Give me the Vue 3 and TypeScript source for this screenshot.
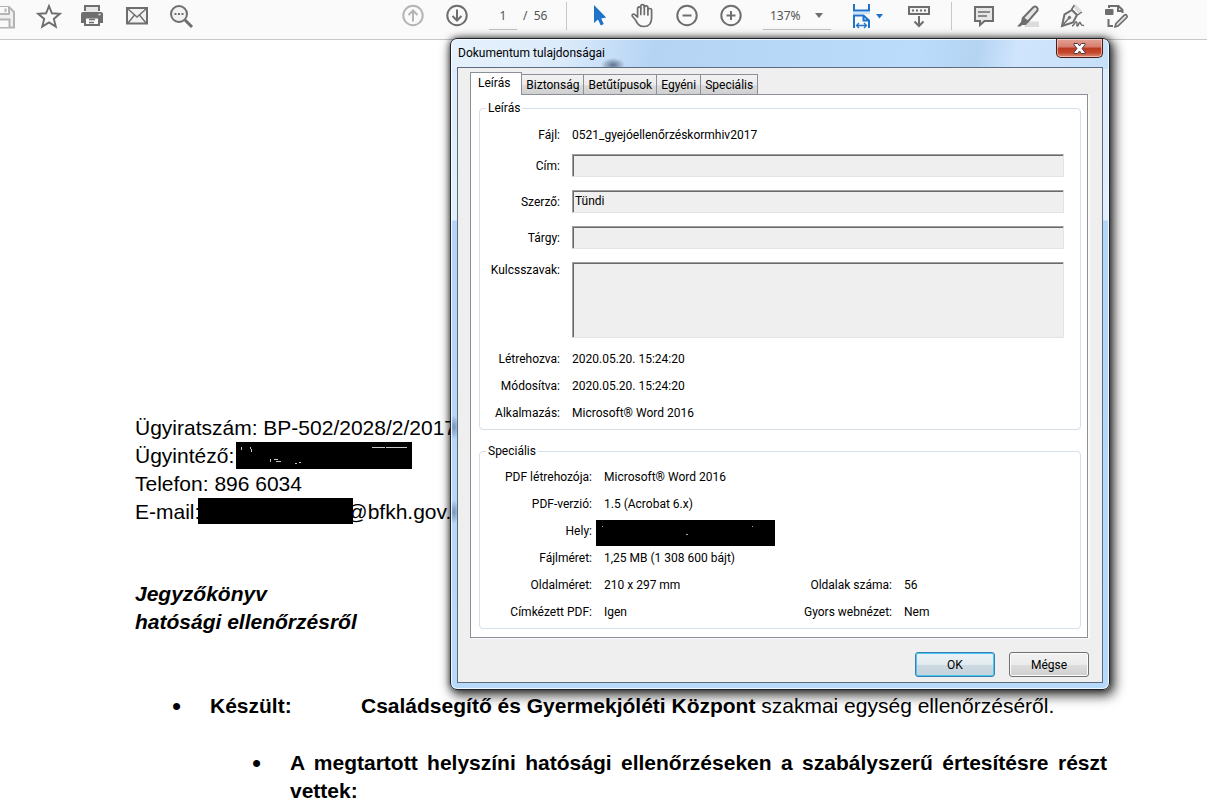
<script setup lang="ts">
import { ref } from 'vue'

interface Row {
  label: string
  value: string
}

const tabs: string[] = ['Leírás', 'Biztonság', 'Betűtípusok', 'Egyéni', 'Speciális']
const activeTab = ref<string>('Leírás')
const page = ref<string>('1')
const title = ref<string>('')
const author = ref<string>('Tündi')
const subject = ref<string>('')
const keywords = ref<string>('')

const dates: Row[] = [
  { label: 'Létrehozva:', value: '2020.05.20. 15:24:20' },
  { label: 'Módosítva:', value: '2020.05.20. 15:24:20' },
  { label: 'Alkalmazás:', value: 'Microsoft® Word 2016' },
]
</script>

<template>
  <div class="app">
    <header class="toolbar">
      <div class="group first">
        <button class="tool" aria-label="Mentés">
          <svg width="26" height="26" viewBox="0 0 26 26" fill="none" stroke="#b4b4b4" stroke-width="2">
            <path d="M3 4h14l5 5v15.500H3z" fill="#f0f0f0" />
            <path d="M7 4v7h10V4M7 24v-7.500h10.500V24" fill="#fafafa" />
            <path d="M13.500 5.500v3.500" />
          </svg>
        </button>
        <button class="tool" aria-label="Csillag">
          <svg width="26" height="26" viewBox="0 0 26 26" fill="none" stroke="#6e6e6e" stroke-width="1.900">
            <path d="M13 3l2.900 7.300 8 .5-6.100 5.100 2 7.700L13 19.400l-6.800 4.200 2-7.700-6.100-5.100 8-.5z" />
          </svg>
        </button>
        <button class="tool" aria-label="Nyomtatás">
          <svg width="26" height="26" viewBox="0 0 26 26">
            <path d="M4 2h16v6H4z" fill="#6e6e6e" />
            <path d="M6 4h12v5H6z" fill="#e6e6e6" />
            <path d="M3 9h18a2 2 0 0 1 2 2v9H1v-9a2 2 0 0 1 2-2z" fill="#6e6e6e" />
            <path d="M5 14.500h14V22H5z" fill="#fafafa" stroke="#6e6e6e" stroke-width="2" />
            <path d="M9 16.500h6M9 19.500h5" stroke="#6e6e6e" stroke-width="1.300" />
            <path d="M18.500 11.500h2" stroke="#e6e6e6" stroke-width="1.500" />
          </svg>
        </button>
        <button class="tool" aria-label="E-mail">
          <svg width="26" height="26" viewBox="0 0 26 26" fill="none" stroke="#6e6e6e">
            <rect x="3" y="5" width="20" height="15.500" stroke-width="2" fill="#f2f2f2" />
            <path d="M4 6l9 8 9-8M4 20l6.500-8M22 20l-6.500-8" stroke-width="1.400" />
          </svg>
        </button>
        <button class="tool" aria-label="Keresés">
          <svg width="26" height="26" viewBox="0 0 26 26" fill="none" stroke="#6e6e6e">
            <circle cx="11" cy="11" r="8" stroke-width="2" fill="#f2f2f2" />
            <path d="M17 17l7 7" stroke-width="3" />
            <path d="M6.500 11h2M10 11h2M13.500 11h2" stroke-width="2" />
          </svg>
        </button>
      </div>
      <div class="spacer-left"></div>
      <div class="group">
        <button class="tool" aria-label="Előző oldal">
          <svg width="26" height="26" viewBox="0 0 26 26" fill="none" stroke="#b4b4b4" stroke-width="2">
            <circle cx="13" cy="12.500" r="9.700" />
            <path d="M13 18.500V8M8.500 12L13 7.500l4.500 4.500" />
          </svg>
        </button>
        <button class="tool" aria-label="Következő oldal">
          <svg width="26" height="26" viewBox="0 0 26 26" fill="none" stroke="#6e6e6e" stroke-width="2">
            <circle cx="13" cy="12.500" r="9.700" />
            <path d="M13 6.500V17M8.500 13l4.500 4.500 4.500-4.500" />
          </svg>
        </button>
        <input v-model="page" class="page" aria-label="Oldalszám" />
        <span class="total">/&nbsp; 56</span>
        <span class="divider"></span>
        <button class="tool" aria-label="Kijelölés">
          <svg width="26" height="26" viewBox="0 0 26 26" fill="#1f74c9">
            <path d="M8 2v18l4-3.500 2.800 6 3-1.500-2.600-5.500 5-1z" />
          </svg>
        </button>
        <button class="tool" aria-label="Kéz">
          <svg width="26" height="26" viewBox="0 0 26 26" fill="#fafafa" stroke="#6e6e6e" stroke-width="1.700" stroke-linejoin="round" stroke-linecap="round">
            <path d="M7.600 14V5.500a1.600 1.600 0 0 1 3.200 0V3.400a1.700 1.700 0 0 1 3.500 0v1a1.700 1.700 0 0 1 3.600.4v2.400a1.700 1.700 0 0 1 3.700.3V15c0 6-3 8.500-7.700 8.500-5 0-6.600-3-8.400-6.500L2.200 13c-.5-1.800 1.400-2.500 2.700-1.300z" />
            <path d="M10.800 5v6.500M14.300 4v7.500M17.900 6v6" fill="none" />
          </svg>
        </button>
        <button class="tool" aria-label="Kicsinyítés">
          <svg width="26" height="26" viewBox="0 0 26 26" fill="none" stroke="#6e6e6e" stroke-width="2">
            <circle cx="13" cy="12.500" r="9.700" />
            <path d="M8.500 12.500h9" />
          </svg>
        </button>
        <button class="tool" aria-label="Nagyítás">
          <svg width="26" height="26" viewBox="0 0 26 26" fill="none" stroke="#6e6e6e" stroke-width="2">
            <circle cx="13" cy="12.500" r="9.700" />
            <path d="M8.500 12.500h9M13 8v9" />
          </svg>
        </button>
        <label class="zoom">
          <select aria-label="Nagyítás mértéke">
            <option>137%</option>
          </select>
          <svg width="8" height="5" viewBox="0 0 8 5" fill="#6e6e6e"><path d="M0 0h8L4 5z" /></svg>
        </label>
        <button class="tool fit" aria-label="Szélesség igazítása">
          <svg width="20" height="26" viewBox="0 0 20 26" fill="none" stroke="#1f74c9" stroke-width="2">
            <path d="M1 1v6.500h15V1" />
            <path d="M0 10h17" stroke="#cfe3f6" />
            <path d="M1 25V12.500h9.500l5.500 5V25M10.500 12.500v5H16" />
            <path d="M4 22.500h9M6 20l-2.500 2.500L6 25M11 20l2.500 2.500L11 25" stroke-width="1.300" />
          </svg>
          <svg width="7" height="5" viewBox="0 0 7 5" fill="#1f74c9"><path d="M0 0h7L3.500 4.500z" /></svg>
        </button>
        <button class="tool" aria-label="Eszköztár">
          <svg width="26" height="26" viewBox="0 0 26 26" fill="none" stroke="#6e6e6e" stroke-width="2">
            <rect x="3" y="4" width="20" height="7" fill="#f2f2f2" />
            <path d="M6 7.500h14" stroke-dasharray="2 2" />
            <path d="M13 13v9.500M8.500 18.500L13 23l4.500-4.500" />
          </svg>
        </button>
        <span class="divider"></span>
        <button class="tool" aria-label="Megjegyzés">
          <svg width="26" height="26" viewBox="0 0 26 26" fill="#e6e6e6" stroke="#6e6e6e" stroke-width="2">
            <path d="M4 4h18v14H13.500L9 22v-4H4z" />
            <path d="M7 9h12M7 13h9" stroke-width="1.300" />
          </svg>
        </button>
        <button class="tool" aria-label="Kiemelés">
          <svg width="26" height="26" viewBox="0 0 26 26">
            <path d="M13 18.500h11V24H9z" fill="#dcdcdc" />
            <path d="M8 15L18.500 4a2.800 2.800 0 0 1 4 3.500L13 18.500z" fill="#e6e6e6" stroke="#6e6e6e" stroke-width="2" />
            <path d="M7 14.500l6.500 4.500-2.500 3H7l-1.500 1.500H2L6 19z" fill="#6e6e6e" />
          </svg>
        </button>
        <button class="tool" aria-label="Aláírás">
          <svg width="26" height="26" viewBox="0 0 26 26" fill="none" stroke="#6e6e6e" stroke-width="2">
            <path d="M14 4l3-2.500 6 6-3.500 3z" fill="#dedede" stroke="none" />
            <path d="M3 23l2.500-11.500L13 7l5 5-4 7.500z" fill="#f4f4f4" />
            <path d="M12.500 6.500l3-4.500M18.500 12l4.500-3M3 23l7-8" stroke-width="1.500" />
            <circle cx="10.500" cy="14.500" r="1.200" fill="#6e6e6e" stroke-width="1" />
            <path d="M13 23c3-1 3-5 4.500-4s-.5 4 1 4 1-4 2.500-3.500-.5 3.500 4 3" stroke-width="1.500" />
          </svg>
        </button>
        <button class="tool" aria-label="Szerkesztés">
          <svg width="26" height="26" viewBox="0 0 26 26" fill="none" stroke="#6e6e6e" stroke-width="2">
            <path d="M6 5V3h9.500l4 4v3M5.500 16v7H10M15 3v5h4.500" />
            <rect x="2" y="6" width="8.500" height="6" rx="1" fill="#6e6e6e" stroke="none" />
            <path d="M13 20.500L21.500 12c1.500-1 3.500 1 2.300 2.500L15 23l-3 .8z" fill="#e6e6e6" stroke-width="1.700" />
          </svg>
        </button>
      </div>
      <div class="spacer-right"></div>
    </header>

    <main class="document">
      <p>Ügyiratszám: BP-502/2028/2/2017</p>
      <p>
        Ügyintéző:&nbsp;<span class="redacted name"><svg width="176" height="27" viewBox="0 0 176 27" fill="none" stroke="#c8c8c8">
          <path d="M5.500 5v3M14.500 5v2M15.500 7v3M34.500 17v3M38 17.500h4M40 19.500h5M59 21.500h2M63 20.500h2M136 5.500h13M150 5.500h21" />
        </svg></span>,
      </p>
      <p>Telefon: 896 6034</p>
      <p>E-mail:<span class="redacted mail"></span>@bfkh.gov.</p>
      <h1>Jegyzőkönyv<br />hatósági ellenőrzésről</h1>
      <ul>
        <li class="item">
          <span class="bullet">•</span>
          <strong class="term">Készült:</strong>
          <span><strong>Családsegítő és Gyermekjóléti Központ</strong> szakmai egység ellenőrzéséről.</span>
        </li>
        <li class="item nested">
          <span class="bullet">•</span>
          <strong class="justified">A megtartott helyszíni hatósági ellenőrzéseken a szabályszerű értesítésre részt vettek:</strong>
        </li>
      </ul>
    </main>

    <section class="dialog" role="dialog" aria-labelledby="dialog-title">
      <div class="titlebar">
        <h2 id="dialog-title">Dokumentum tulajdonságai</h2>
        <button class="close" aria-label="Bezárás">
          <svg width="13" height="11" viewBox="0 0 13 11">
            <path d="M1 .5h3.700L6.500 3 8.300.5H12v1.200L9 5.500l3 3.800v1.200H8.300L6.500 8l-1.800 2.500H1V9.300l3-3.800-3-3.800z" fill="#fff" stroke="#4d3a48" stroke-width="1" />
          </svg>
        </button>
      </div>
      <div class="client">
        <div class="tabs" role="tablist">
          <button
            v-for="tab in tabs"
            :key="tab"
            class="tab"
            :class="{ active: tab === activeTab }"
            role="tab"
            :aria-selected="tab === activeTab"
            @click="activeTab = tab"
          >{{ tab }}</button>
        </div>
        <div class="panel" role="tabpanel">
          <fieldset class="description">
            <legend>Leírás</legend>
            <div class="row">
              <span class="label">Fájl:</span>
              <span>0521_gyejóellenőrzéskormhiv2017</span>
            </div>
            <div class="fields">
              <div class="row">
                <label class="label" for="title">Cím:</label>
                <input id="title" v-model="title" readonly />
              </div>
              <div class="row">
                <label class="label" for="author">Szerző:</label>
                <input id="author" v-model="author" readonly />
              </div>
              <div class="row">
                <label class="label" for="subject">Tárgy:</label>
                <input id="subject" v-model="subject" readonly />
              </div>
              <div class="row top">
                <label class="label" for="keywords">Kulcsszavak:</label>
                <textarea id="keywords" v-model="keywords" readonly></textarea>
              </div>
            </div>
            <div class="dates">
              <div v-for="row in dates" :key="row.label" class="row">
                <span class="label">{{ row.label }}</span>
                <span>{{ row.value }}</span>
              </div>
            </div>
          </fieldset>
          <fieldset class="advanced">
            <legend>Speciális</legend>
            <div class="details">
              <span class="label">PDF létrehozója:</span>
              <span class="wide">Microsoft® Word 2016</span>
              <span class="label">PDF-verzió:</span>
              <span class="wide">1.5 (Acrobat 6.x)</span>
              <span class="label">Hely:</span>
              <span class="wide"><span class="location"><svg width="179" height="26" viewBox="0 0 179 26" stroke="#a8a8a8">
                <path d="M6 6.500h1M90 14.500h2M156 6.500h1" />
              </svg></span></span>
              <span class="label">Fájlméret:</span>
              <span class="wide">1,25 MB (1 308 600 bájt)</span>
              <span class="label">Oldalméret:</span>
              <span>210 x 297 mm</span>
              <span class="label">Oldalak száma:</span>
              <span>56</span>
              <span class="label">Címkézett PDF:</span>
              <span>Igen</span>
              <span class="label">Gyors webnézet:</span>
              <span>Nem</span>
            </div>
          </fieldset>
        </div>
        <div class="actions">
          <button class="action default">OK</button>
          <button class="action">Mégse</button>
        </div>
      </div>
    </section>
  </div>
</template>

<style>
html,
body {
  margin: 0;
  height: 100%;
  overflow: hidden;
  background: #fff;
}
</style>

<style scoped>
.app {
  position: relative;
  overflow: hidden;
  height: 100vh;
  color: #000;
  font-family: "Noto Sans", "Open Sans", sans-serif;
  font-size: 12px;
}
.app * {
  box-sizing: border-box;
}
button,
input,
select,
textarea {
  font: inherit;
  color: inherit;
  margin: 0;
}

/* Toolbar */
.toolbar {
  display: flex;
  height: 40px;
  background: #fafafa;
  border-bottom: 1px solid #c8c8c8;
}
.group {
  display: flex;
  flex: none;
  height: 32px;
}
.first {
  margin-left: -17px;
}
.spacer-left {
  flex: 188 0 0;
}
.spacer-right {
  flex: 69 0 0;
}
.tool {
  display: flex;
  align-items: center;
  justify-content: center;
  width: 44px;
  height: 32px;
  padding: 0;
  border: 0;
  background: none;
}
.page {
  width: 28px;
  height: 30px;
  margin-left: 10px;
  padding: 2px 0 0;
  border: 0;
  border-bottom: 1px solid #c0c0c0;
  background: none;
  color: #555;
  text-align: center;
}
.total {
  width: 39px;
  padding-left: 6px;
  color: #555;
  line-height: 32px;
  white-space: nowrap;
}
.divider {
  width: 1px;
  height: 28px;
  margin: 2px 10px 0;
  background: #c8c8c8;
}
.zoom {
  display: flex;
  align-items: center;
  width: 68px;
  height: 30px;
  margin-left: 10px;
  padding: 2px 8px 0 7px;
  border-bottom: 1px solid #c0c0c0;
  color: #555;
}
.zoom select {
  flex: 1;
  min-width: 0;
  padding: 0;
  border: 0;
  background: none;
  appearance: none;
}
.fit {
  width: 66px;
  gap: 3px;
  padding-left: 8px;
}

/* Document page */
.document {
  margin: 374px 100px 0 135px;
  font-family: "Liberation Sans", Arial, sans-serif;
  font-size: 21px;
  line-height: 28px;
}
.document p {
  margin: 0;
  white-space: nowrap;
}
.redacted {
  position: relative;
  display: inline-block;
  background: #000;
  vertical-align: middle;
}
.redacted svg {
  display: block;
}
.name {
  width: 176px;
  height: 27px;
  margin: -4px -5px 0 -4px;
}
.mail {
  width: 155px;
  height: 26px;
  margin: -4px -7px 0 -2px;
}
.document h1 {
  margin: 54px 0 56px;
  font-size: 21px;
  font-style: italic;
}
.document ul {
  margin: 0;
  padding: 0;
  list-style: none;
}
.item {
  display: flex;
  padding-left: 37px;
}
.bullet {
  flex: none;
  width: 38px;
  font-size: 26px;
}
.term {
  width: 151px;
}
.nested {
  margin-top: 29px;
  padding-left: 117px;
}
.justified {
  flex: 1;
  text-align: justify;
}

/* Dialog window */
.dialog {
  position: absolute;
  left: 450px;
  top: 38px;
  width: 660px;
  padding: 0 6px 6px;
  border: 1px solid #1c222e;
  border-radius: 7px;
  background:
    radial-gradient(ellipse 12px 7px at 162px 26px, rgba(50, 70, 100, 0.7), transparent),
    radial-gradient(ellipse 5px 12px at 3px 388px, rgba(50, 80, 120, 0.5), transparent),
    radial-gradient(ellipse 5px 12px at 3px 473px, rgba(50, 80, 120, 0.5), transparent),
    linear-gradient(100deg, #e6f1fc 0, #dcebfb 110px, #b5d4f4 200px, #bbdcfb 460px, #b4d4f2 520px, #d0e5fd 560px, #c5dff8 660px) top / 100% 30px no-repeat,
    linear-gradient(#dcebfa 0, #e2effc 181px, #b4d5f7 182px, #b9d9fa 100%);
  box-shadow:
    inset 0 0 0 1px rgba(255, 255, 255, 0.8),
    0 0 6px rgba(0, 0, 0, 0.6),
    3px 4px 12px 2px rgba(0, 0, 0, 0.7);
  font-family: Roboto, "Noto Sans", sans-serif;
}
.titlebar {
  display: flex;
  justify-content: space-between;
  height: 28px;
}
.titlebar h2 {
  margin: 0;
  padding-left: 1px;
  font-size: 12px;
  font-weight: 400;
  line-height: 28px;
}
.close {
  display: flex;
  align-items: center;
  justify-content: center;
  width: 47px;
  height: 19px;
  padding: 0;
  border: 1px solid #4a1a1c;
  border-top: 0;
  border-radius: 0 0 5px 5px;
  background: linear-gradient(#e3a295 0, #d47c6d 45%, #ba3820 50%, #c4482e 75%, #dc8a70 100%);
  box-shadow: inset 0 0 0 1px rgba(255, 220, 210, 0.6);
}
.client {
  padding: 4px 13px 5px 12px;
  border: 1px solid #5b6b80;
  background: #efefef;
}
.tabs {
  display: flex;
  align-items: flex-end;
  height: 22px;
}
.tab {
  height: 20px;
  padding: 0 4px;
  border: 1px solid #8c8e99;
  border-left-width: 0;
  border-bottom: 0;
  background: linear-gradient(#f2f2f2 0, #ebebeb 50%, #dddddd 51%, #cfcfcf 100%);
  line-height: 20px;
  white-space: nowrap;
}
.tab.active {
  position: relative;
  height: 23px;
  margin-bottom: -1px;
  padding: 0 11px 2px 7px;
  border-left-width: 1px;
  background: #fff;
}
.panel {
  margin-right: 1px;
  padding: 5px 6px 8px 8px;
  border: 1px solid #8c8e99;
  background: #fff;
  box-shadow: 2px 1px 0 #fafafa;
}
fieldset {
  min-width: 0;
  margin: 0;
  border: 1px solid #d5dfe5;
  border-radius: 4px;
  line-height: 16px;
}
legend {
  margin-left: 6px;
  padding: 0 2px;
}
.description {
  padding: 11px 16px 8px 0;
}
.advanced {
  margin-top: 13px;
  padding: 10px 0 8px;
}
.row {
  display: grid;
  grid-template-columns: 80px 1fr;
  column-gap: 12px;
  align-items: center;
}
.row.top {
  align-items: start;
}
.label {
  text-align: right;
  white-space: nowrap;
}
.fields {
  display: grid;
  gap: 13px;
  margin: 11px 0 13px;
}
.dates {
  display: grid;
  gap: 11px;
}
.fields input,
.fields textarea {
  display: block;
  width: 100%;
  height: 23px;
  padding: 0 2px 1px;
  border: 1px solid #a0a0a0;
  border-right-color: #e3e3e3;
  border-bottom-color: #e3e3e3;
  border-radius: 0;
  outline: 0;
  background: #efefef;
  box-shadow: inset 1px 1px 0 #696969;
  resize: none;
}
.fields textarea {
  height: 76px;
}
.details {
  display: grid;
  grid-template-columns: 112px 176px 100px 1fr;
  gap: 11px 12px;
}
.wide {
  grid-column: span 3;
}
.location {
  display: block;
  width: 179px;
  height: 26px;
  margin: -3px 0 -7px -8px;
  background: #000;
}
.actions {
  display: flex;
  justify-content: flex-end;
  gap: 14px;
  margin: 14px 0 0;
}
.action {
  width: 80px;
  height: 25px;
  padding: 0;
  border: 1px solid #707070;
  border-radius: 3px;
  background: linear-gradient(#f2f2f2 0, #ebebeb 50%, #dddddd 51%, #cfcfcf 100%);
  box-shadow: inset 0 0 0 1px #fcfcfc;
}
.action.default {
  border-color: #3c7fb1;
  background: linear-gradient(#edf2f5 0, #e2eaef 50%, #ccd9e1 51%, #c5d3dc 100%);
  box-shadow: inset 0 0 0 1px #46c8f0;
}
</style>
